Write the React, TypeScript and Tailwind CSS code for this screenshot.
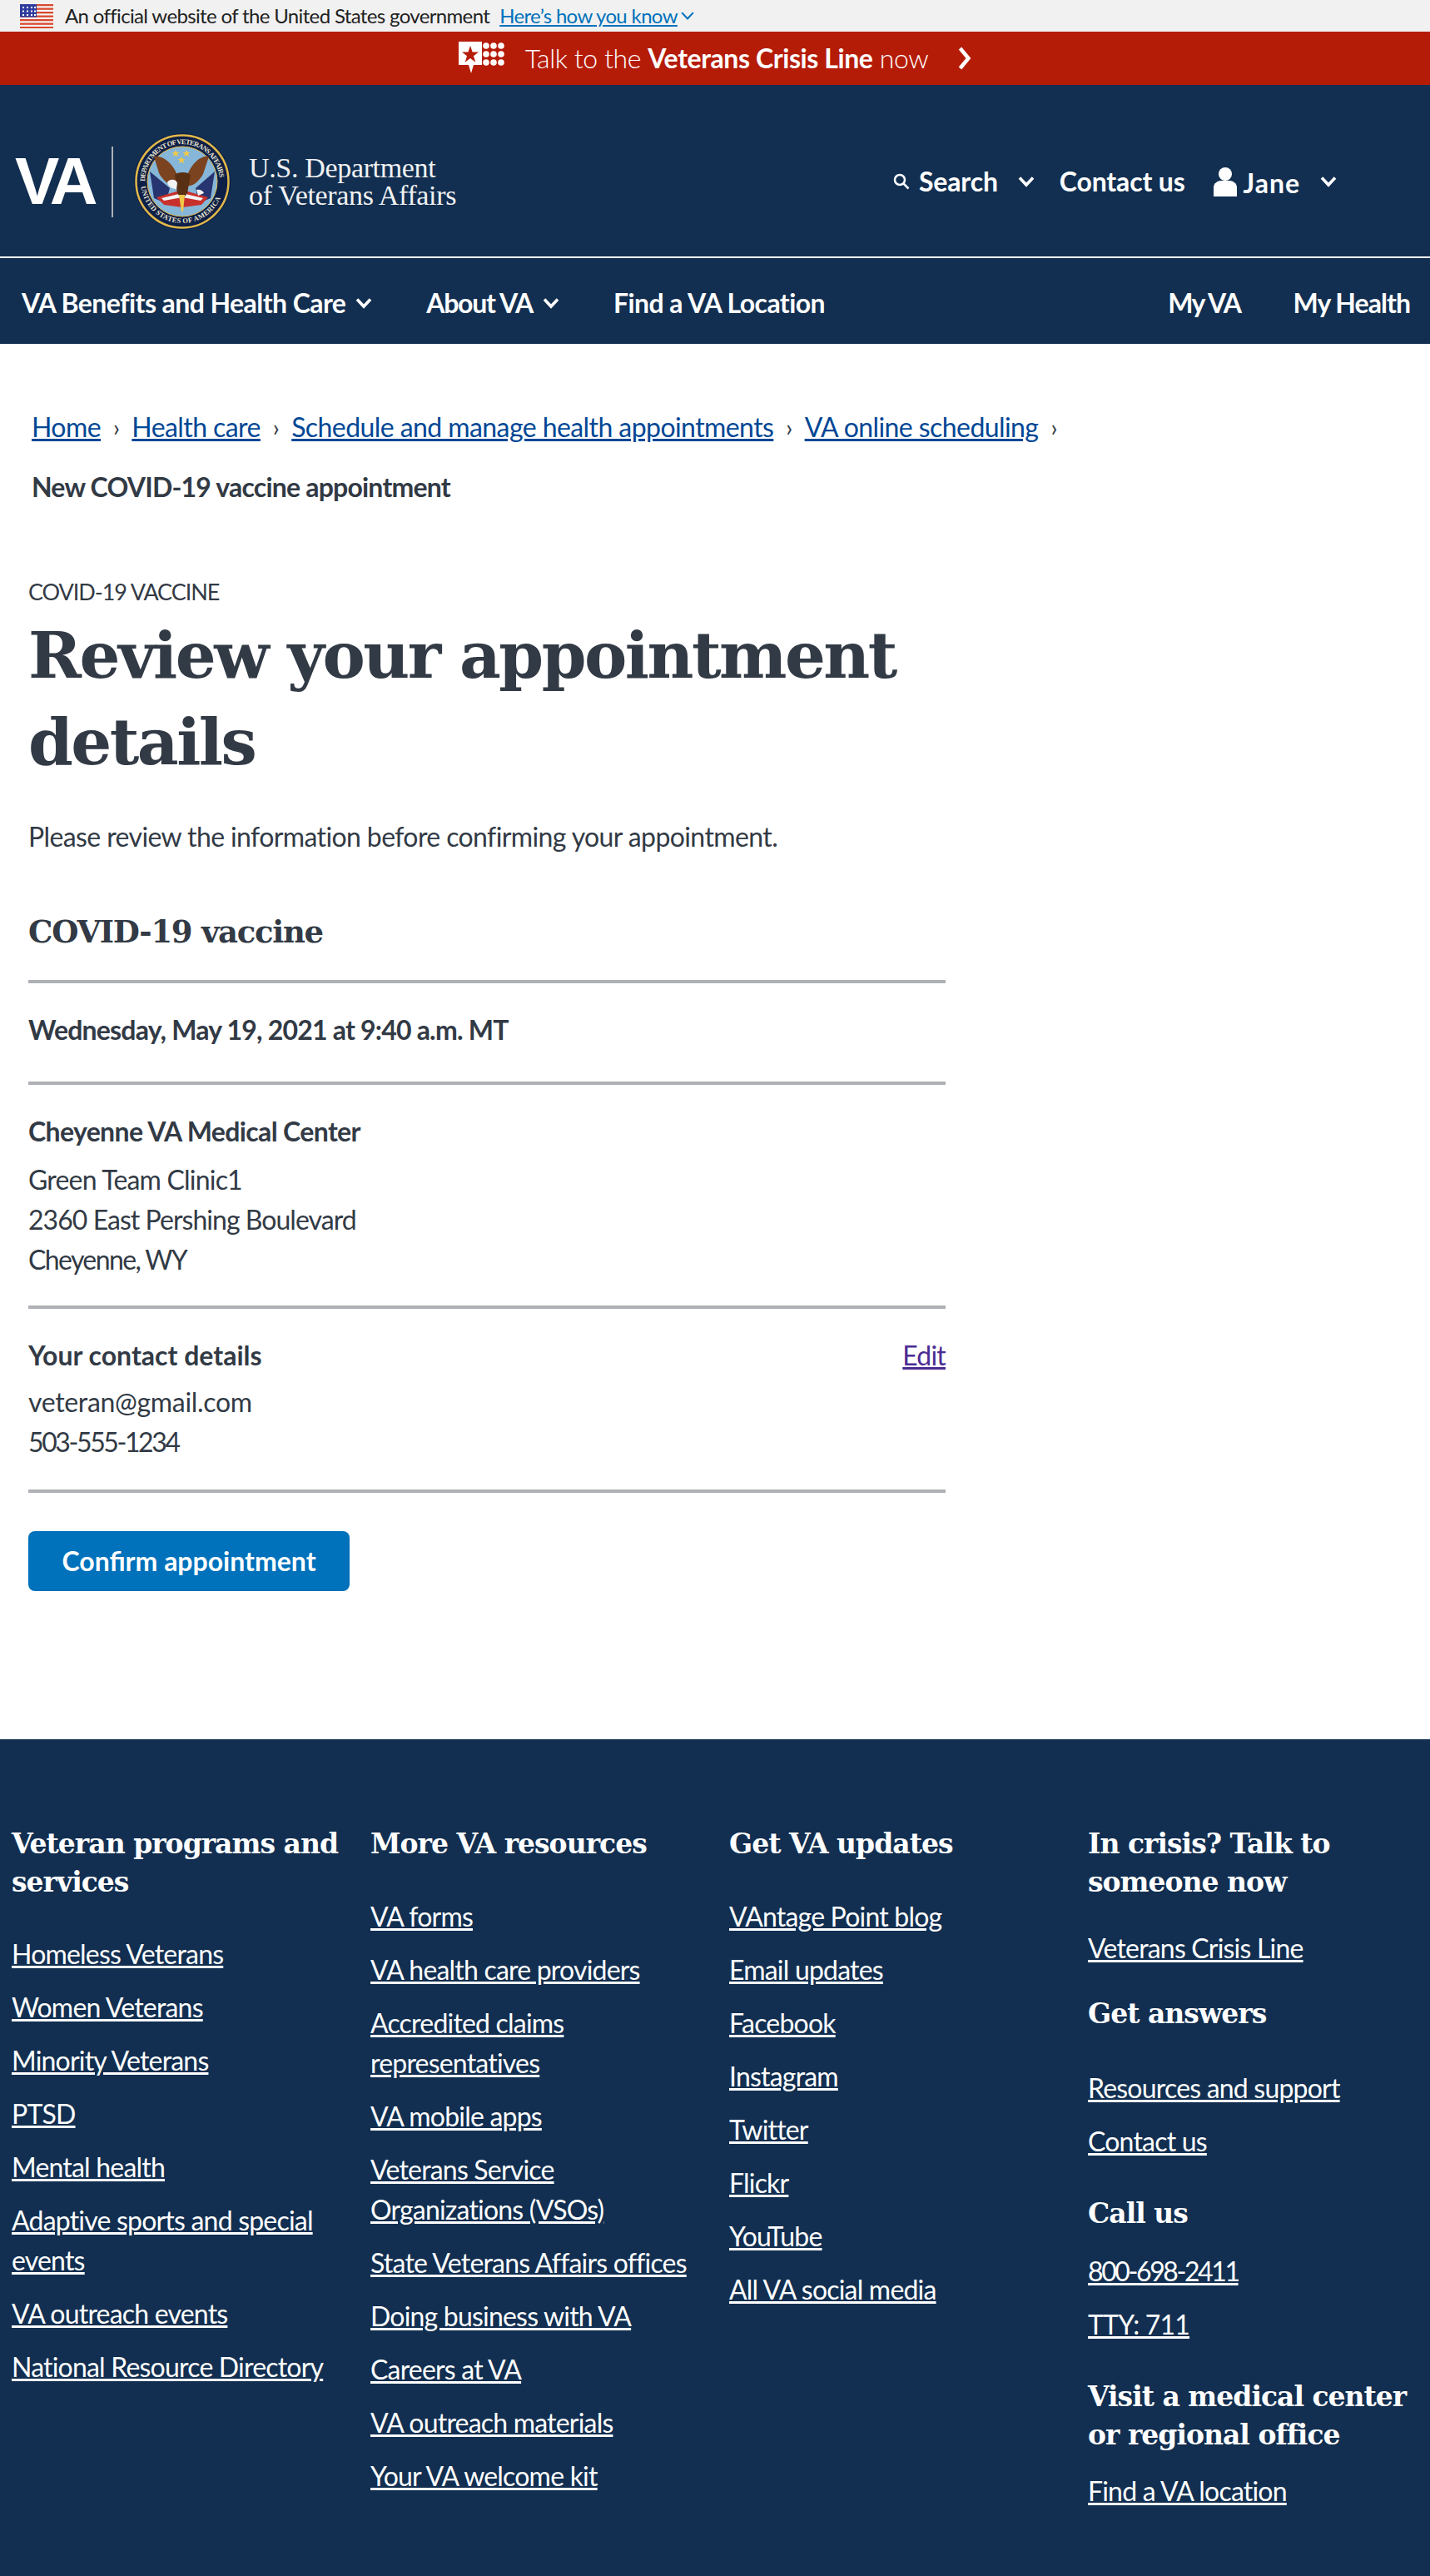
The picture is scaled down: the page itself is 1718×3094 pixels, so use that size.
const sans = "font-['Lato','Noto_Sans',sans-serif]";

const breadcrumbs = [
  "Home",
  "Health care",
  "Schedule and manage health appointments",
  "VA online scheduling",
];

type FooterItem = { heading?: string; link?: string; spacing?: string };

const footerColumns: FooterItem[][] = [
  [
    { heading: "Veteran programs and services", spacing: "mb-[39px]" },
    { link: "Homeless Veterans" },
    { link: "Women Veterans" },
    { link: "Minority Veterans" },
    { link: "PTSD" },
    { link: "Mental health" },
    { link: "Adaptive sports and special events" },
    { link: "VA outreach events" },
    { link: "National Resource Directory" },
  ],
  [
    { heading: "More VA resources", spacing: "mb-10" },
    { link: "VA forms" },
    { link: "VA health care providers" },
    { link: "Accredited claims representatives" },
    { link: "VA mobile apps" },
    { link: "Veterans Service Organizations (VSOs)" },
    { link: "State Veterans Affairs offices" },
    { link: "Doing business with VA" },
    { link: "Careers at VA" },
    { link: "VA outreach materials" },
    { link: "Your VA welcome kit" },
  ],
  [
    { heading: "Get VA updates", spacing: "mb-10" },
    { link: "VAntage Point blog" },
    { link: "Email updates" },
    { link: "Facebook" },
    { link: "Instagram" },
    { link: "Twitter" },
    { link: "Flickr" },
    { link: "YouTube" },
    { link: "All VA social media" },
  ],
  [
    { heading: "In crisis? Talk to someone now", spacing: "mb-8" },
    { link: "Veterans Crisis Line" },
    { heading: "Get answers", spacing: "mt-4 mb-[42px]" },
    { link: "Resources and support" },
    { link: "Contact us" },
    { heading: "Call us", spacing: "mt-6 mb-[22px]" },
    { link: "800-698-2411", spacing: "tracking-[-0.075em]" },
    { link: "TTY: 711", spacing: "tracking-[-0.05em]" },
    { heading: "Visit a medical center or regional office", spacing: "mt-6 mb-5" },
    { link: "Find a VA location" },
  ],
];

function Chevron({ className, stroke = 3.6 }: { className: string; stroke?: number }) {
  return (
    <svg viewBox="0 0 20 14" className={className} fill="none" stroke="currentColor" strokeWidth={stroke}>
      <path d="M2 2.500 10 11l8-8.500" />
    </svg>
  );
}

function Flag() {
  return (
    <svg viewBox="0 0 40 29" className="mr-[14px] ml-6 h-[29px] w-10 shrink-0">
      <rect width="40" height="29" fill="#f6f6f6" />
      {[0, 1, 2, 3, 4, 5, 6].map((i) => (
        <rect key={i} y={i * 4.5} width="40" height="2.3" fill="#d8492f" />
      ))}
      <rect width="20" height="15.500" fill="#2f3c9e" />
      {[3, 8, 13, 17].map((x) =>
        [3, 7.5, 12].map((y) => <rect key={`${x}-${y}`} x={x} y={y} width="2" height="2" fill="#fff" />),
      )}
    </svg>
  );
}

function CrisisIcon() {
  return (
    <svg viewBox="0 0 56 40" className="h-10 w-14 shrink-0" fill="#fff">
      <path d="M0 0h28v28H18l-3 10-3-10H0z" />
      <path fill="#b51c08" d="m14 5 2.600 7.500H24l-6 4.700 2.300 7.500-6.300-4.600-6.300 4.600L10 17.200l-6-4.700h7.400z" />
      {[33, 42, 51].map((x) =>
        [5, 15, 25].map((y) => <circle key={`${x}-${y}`} cx={x} cy={y} r="3.800" />),
      )}
    </svg>
  );
}

function Seal() {
  return (
    <svg viewBox="0 0 116 116" className="h-[116px] w-[116px] shrink-0">
      <defs>
        <path id="seal-top" d="M13 58a45 45 0 0 1 90 0" />
        <path id="seal-bottom" d="M8 58a50 50 0 0 0 100 0" />
      </defs>
      <circle cx="58" cy="58" r="58" fill="#0e1f47" />
      <circle cx="58" cy="58" r="55.500" fill="none" stroke="#e0b84a" strokeWidth="2.500" />
      <circle cx="58" cy="58" r="42" fill="#86b6d8" stroke="#e0b84a" strokeWidth="1" />
      <text fontFamily="'Liberation Serif',serif" fontSize="8.500" fontWeight="700" fill="#e8e4d0" textLength="136">
        <textPath href="#seal-top">DEPARTMENT OF VETERANS AFFAIRS</textPath>
      </text>
      <text fontFamily="'Liberation Serif',serif" fontSize="8.500" fontWeight="700" fill="#e8e4d0" textLength="130">
        <textPath href="#seal-bottom" startOffset="6">UNITED STATES OF AMERICA</textPath>
      </text>
      <path fill="#f0c94a" d="m50 20 1.500 3h3l-2.400 2 1 3.200-3.100-1.900-3 1.900 1-3.200-2.500-2h3.100zm13 0 1.500 3h3l-2.400 2 1 3.200-3.100-1.900-3 1.900 1-3.200-2.500-2h3.100zm-6 8 1.500 3h3l-2.400 2 1 3.200-3.100-1.900-3 1.900 1-3.200-2.500-2h3.100z" />
      <path fill="#26346f" d="M19 46 43 66 38 84 24 78zM97 46 74 66 78 84 92 78z" />
      <path fill="#c8302c" d="M27 77 58 68l31 9-8 9-23 3-22-3z" />
      <path fill="#f5f5f5" d="M33 78 58 72l25 6-3 3-22-4-22 4z" />
      <path fill="#7b4320" d="M24 28c10-2 22 8 27 20l1 14c-9 2-17-5-22-14zM90 28c-8-2-19 6-25 20l-3 15c8 2 16-5 21-14z" />
      <path fill="#5a3015" d="M49 50c3-4 16-4 19 0l-4 22-6 8-6-8z" />
      <path fill="#f2f2f2" d="M40 59c3-5 11-4 12 1l-1 7c-4 0-10-2-11-8zM75 68c4-1 8 1 9 4l-7 3z" />
      <path fill="#f0c94a" d="M54 74h7l-2 20h-2z" />
    </svg>
  );
}

function HeaderLogo() {
  return (
    <div className="flex items-center">
      <span className="ml-[18px] font-['Liberation_Sans',sans-serif] text-[80px] leading-none font-bold tracking-[-0.07em] text-white">
        VA
      </span>
      <span className="mr-[25px] ml-[22px] h-[85px] w-0.5 bg-[#aeb0b5]" />
      <Seal />
      <div className="ml-[22px] font-['Liberation_Serif',serif] text-[34px] leading-[33px] font-normal tracking-[-0.01em] text-[#f1f1f1]">
        U.S. Department
        <br />
        of Veterans Affairs
      </div>
    </div>
  );
}

function FooterColumn({ items }: { items: FooterItem[] }) {
  return (
    <div className="flex flex-col">
      {items.map((item) =>
        item.heading ? (
          <h3
            key={item.heading}
            className={`pr-2 font-['DejaVu_Serif',serif] text-[33px] leading-[46px] font-bold tracking-[-0.03em] text-white ${item.spacing}`}
          >
            {item.heading}
          </h3>
        ) : (
          <a
            key={item.link}
            className={`mb-4 w-fit max-w-[390px] text-[32px] leading-[48px] tracking-[-0.025em] text-white underline ${item.spacing ?? ""}`}
          >
            {item.link}
          </a>
        ),
      )}
    </div>
  );
}

function Row({ children }: { children: React.ReactNode }) {
  return <div className="border-b-4 border-[#aeb0b5]">{children}</div>;
}

export default function App() {
  return (
    <div className={`${sans} min-h-[3094px] bg-white text-[32px] leading-[48px] tracking-[-0.025em] text-[#323a45]`}>
      <div className="flex h-[38px] items-center bg-[#f1f1f1] text-[24px] leading-none tracking-[-0.027em] text-[#212121]">
        <Flag />
        <span>An official website of the United States government</span>
        <a className="ml-3 text-[#0071bb] underline">Here’s how you know</a>
        <Chevron className="ml-0.5 h-3 w-5 text-[#0071bb]" stroke={2.4} />
      </div>

      <div className="flex h-[64px] items-center justify-center bg-[#b51c08] tracking-[-0.013em] text-white">
        <CrisisIcon />
        <span className="ml-6 font-light">
          Talk to the <strong className="font-bold">Veterans Crisis Line</strong> now
        </span>
        <svg viewBox="0 0 16 28" className="ml-9 h-7 w-4" fill="none" stroke="currentColor" strokeWidth="4.500">
          <path d="m2.500 2 10 12-10 12" />
        </svg>
      </div>

      <div className="bg-[#122f51] font-bold tracking-[-0.018em] text-white">
        <header className="flex h-[208px] items-center border-b-2 border-white pt-[26px]">
          <HeaderLogo />
          <div className="ml-auto flex items-center pr-[112px] tracking-[-0.005em]">
            <svg viewBox="0 0 20 20" className="mr-[11px] h-5 w-5" fill="none" stroke="currentColor" strokeWidth="2.500">
              <circle cx="8" cy="8" r="6" />
              <path d="m12.500 12.500 6 6" />
            </svg>
            <span>Search</span>
            <Chevron className="mr-[30px] ml-6 h-3.5 w-5" />
            <span>Contact us</span>
            <svg viewBox="0 0 28 36" className="mr-2 ml-[34px] h-9 w-7" fill="currentColor">
              <circle cx="14" cy="9" r="8" />
              <path d="M0 36V25c0-5 5-8 9-8h10c4 0 9 3 9 8v11z" />
            </svg>
            <span className="mt-1 tracking-[0.03em]">Jane</span>
            <Chevron className="ml-6 h-3.5 w-5" />
          </div>
        </header>

        <nav className="flex h-[103px] items-center pt-[5px] pr-6 pl-[26px]">
          <span>VA Benefits and Health Care</span>
          <Chevron className="mr-[65px] ml-3 h-3.5 w-5" />
          <span className="tracking-[-0.04em]">About VA</span>
          <Chevron className="mr-[65px] ml-3 h-3.5 w-5" />
          <span>Find a VA Location</span>
          <span className="ml-auto tracking-[-0.05em]">My VA</span>
          <span className="ml-[63px] tracking-[-0.03em]">My Health</span>
        </nav>
      </div>

      <main className="px-[34px] pt-16 pb-[178px]">
        <div className="ml-1 flex h-[72px] items-center tracking-[-0.018em]">
          {breadcrumbs.map((crumb) => (
            <div key={crumb} className="flex items-center">
              <a className="text-[#004795] underline">{crumb}</a>
              <span className="mx-[15px] text-[28px]">›</span>
            </div>
          ))}
        </div>
        <div className="ml-1 flex h-[72px] items-center font-bold">New COVID-19 vaccine appointment</div>

        <div className="mt-[72px] w-[1102px]">
          <div className="text-[27px] leading-[36px] tracking-[-0.04em]">COVID-19 VACCINE</div>
          <h1 className="mt-[6px] font-['DejaVu_Serif',serif] text-[77px] leading-[104px] font-bold tracking-[-0.033em]">
            Review your appointment details
          </h1>
          <p className="mt-[38px] tracking-[-0.019em]">Please review the information before confirming your appointment.</p>

          <h2 className="mt-[66px] border-b-4 border-[#aeb0b5] pb-[34px] font-['DejaVu_Serif',serif] text-[37px] leading-[48px] font-bold tracking-[-0.035em]">
            COVID-19 vaccine
          </h2>

          <Row>
            <div className="pt-[32px] pb-[38px] font-bold">Wednesday, May 19, 2021 at 9:40 a.m. MT</div>
          </Row>

          <Row>
            <div className="pt-[32px] pb-[31px]">
              <div className="pb-[10px] font-bold tracking-[-0.02em]">Cheyenne VA Medical Center</div>
              <div>Green Team Clinic1</div>
              <div className="tracking-[-0.03em]">2360 East Pershing Boulevard</div>
              <div className="tracking-[-0.05em]">Cheyenne, WY</div>
            </div>
          </Row>

          <Row>
            <div className="pt-8 pb-[33px]">
              <div className="flex justify-between pb-2">
                <span className="font-bold tracking-normal">Your contact details</span>
                <a className="text-[#4c2c92] underline">Edit</a>
              </div>
              <div className="tracking-[-0.01em]">veteran@gmail.com</div>
              <div className="tracking-[-0.075em]">503-555-1234</div>
            </div>
          </Row>

          <button className="mt-[46px] h-[72px] w-[386px] rounded-lg bg-[#0071bb] font-bold tracking-normal text-white">
            Confirm appointment
          </button>
        </div>
      </main>

      <footer className="grid min-h-[1007px] grid-cols-[431px_431px_431px_1fr] bg-[#122f51] pt-[103px] pl-[14px]">
        {footerColumns.map((items) => (
          <FooterColumn key={items[0].heading} items={items} />
        ))}
      </footer>
    </div>
  );
}
